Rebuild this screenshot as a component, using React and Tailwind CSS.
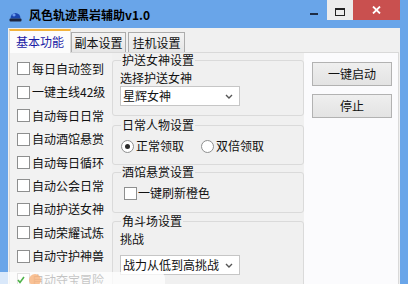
import React from "react";

const font = { fontFamily: '"Noto Sans CJK SC", "Noto Sans", sans-serif' };

const leftItems = [
  "每日自动签到",
  "一键主线42级",
  "自动每日日常",
  "自动酒馆悬赏",
  "自动每日循环",
  "自动公会日常",
  "自动护送女神",
  "自动荣耀试炼",
  "自动守护神兽",
  "自动夺宝冒险",
];

const Box = () => (
  <span className="w-[13px] h-[13px] border border-[#8e8f8f] bg-white shrink-0" />
);

const Radio = ({ checked }) => (
  <span className="w-[13px] h-[13px] rounded-full border border-[#8e8f8f] bg-white shrink-0 flex items-center justify-center">
    {checked && <span className="w-[5px] h-[5px] rounded-full bg-[#2b2b2b]" />}
  </span>
);

const Chevron = () => (
  <svg width="8" height="5" viewBox="0 0 8 5" className="ml-auto mr-[6px]">
    <path d="M1 1 L4 4 L7 1" fill="none" stroke="#555" strokeWidth="1.4" />
  </svg>
);

const Select = ({ value, className }) => (
  <div
    className={`w-[120px] h-[20px] bg-white border border-[#c6c6c6] flex items-center pl-[2px] text-[12px] leading-[14px] ${className}`}
  >
    <span>{value}</span>
    <Chevron />
  </div>
);

const Group = ({ title, className, children }) => (
  <fieldset className={`border border-[#dadada] rounded-[3px] px-[7px] ${className}`}>
    <legend className="ml-[1px] px-[1px] text-[12px] leading-[14px] text-[#111]">{title}</legend>
    {children}
  </fieldset>
);

export default function App() {
  return (
    <div
      className="w-[408px] h-[284px] overflow-hidden bg-[#69a5e9] flex flex-col relative text-[#111]"
      style={font}
    >
      {/* Title Bar */}
      <div className="h-[28px] flex items-start shrink-0">
        <svg width="13" height="12" viewBox="0 0 13 12" className="ml-[9px] mt-[10px]">
          <path d="M1.5 8.5 A5 5.5 0 0 1 11.5 8.5 Z" fill="#1a46b0" />
          <ellipse cx="5" cy="5" rx="1.6" ry="1.4" fill="#6d9cf0" />
          <rect x="0.5" y="8.5" width="12" height="3" rx="1" fill="#1c2540" />
        </svg>
        <span className="ml-[7px] mt-[8px] text-[12px] leading-[14px] font-bold text-black">
          风色轨迹黑岩辅助v1.0
        </span>
        <div className="ml-auto flex items-start mr-[8px]">
          <div className="w-[26px] h-[20px] flex justify-center pt-[13px]">
            <span className="w-[8px] h-[2px] bg-[#1d2c44]" />
          </div>
          <div className="w-[26px] h-[20px] bg-[#ececec] flex justify-center pt-[8px]">
            <span className="w-[10px] h-[8px] border border-t-2 border-[#222]" />
          </div>
          <div className="w-[47px] h-[20px] bg-[#c9504f] flex items-center justify-center">
            <svg width="9" height="8" viewBox="0 0 9 8">
              <path d="M1 0.5 L8 7.5 M8 0.5 L1 7.5" stroke="#fff" strokeWidth="1.8" />
            </svg>
          </div>
        </div>
      </div>

      {/* Client */}
      <div className="h-[280px] shrink-0 mx-[8px] bg-[#f0f0f0] flex flex-col">
        {/* Tabs */}
        <div className="h-[24px] flex items-end pl-[1px] text-[12px] leading-[14px] shrink-0">
          <div className="relative z-10 -mb-[1px] w-[62px] h-[24px] bg-[#fcfcfc] border border-b-0 border-[#d9d9d9] border-t-2 border-t-[#f2b33d] flex items-center justify-center text-[#1b1ba6]">
            基本功能
          </div>
          <div className="w-[55px] h-[20px] bg-gradient-to-b from-[#f3f3f3] to-[#e6e6e6] border border-b-0 border-[#acacac] flex items-center justify-center">
            副本设置
          </div>
          <div className="ml-[2px] w-[57px] h-[20px] bg-gradient-to-b from-[#f3f3f3] to-[#e6e6e6] border border-b-0 border-[#acacac] flex items-center justify-center">
            挂机设置
          </div>
        </div>

        {/* Tab Page */}
        <div className="flex-1 mx-[1px] border border-[#d9d9d9] bg-[#fbfbfd] flex">
          {/* Left checkbox list */}
          <div className="w-[102px] bg-[#f2f2f2] pt-[4.3px] pl-[7px] text-[12px] leading-[14px]">
            {leftItems.map((item) => (
              <div key={item} className="h-[23.4px] flex items-center">
                <Box />
                <span className="ml-[2px] whitespace-nowrap">{item}</span>
              </div>
            ))}
          </div>

          {/* Middle groups */}
          <div className="w-[192px] bg-[#f0f0f0] flex flex-col">
            <Group title="护送女神设置" className="pb-[9px]">
              <div className="mt-[4px] text-[12px] leading-[14px]">选择护送女神</div>
              <Select value="星辉女神" className="mt-[1px]" />
            </Group>

            <Group title="日常人物设置" className="mt-[2px] pb-[11px]">
              <div className="mt-[7px] h-[14px] flex items-center text-[12px] leading-[14px]">
                <span className="ml-[1px]"><Radio checked /></span>
                <span className="ml-[2px]">正常领取</span>
                <span className="ml-[17px]"><Radio /></span>
                <span className="ml-[2px]">双倍领取</span>
              </div>
            </Group>

            <Group title="酒馆悬赏设置" className="pb-[12px]">
              <div className="mt-[7px] h-[14px] flex items-center text-[12px] leading-[14px] pl-[4px]">
                <Box />
                <span className="ml-[1px]">一键刷新橙色</span>
              </div>
            </Group>

            <Group title="角斗场设置" className="mt-[1px] flex-1">
              <div className="mt-[4px] text-[12px] leading-[14px]">挑战</div>
              <Select value="战力从低到高挑战" className="mt-[9px]" />
            </Group>
          </div>

          {/* Right buttons */}
          <div className="flex-1 pl-[8px] pt-[9px] flex flex-col gap-[8px] text-[12px] leading-[14px]">
            <button className="w-[80px] h-[24px] bg-gradient-to-b from-[#efefef] to-[#e3e3e3] border border-[#b2b2b2] flex items-center justify-center">
              一键启动
            </button>
            <button className="w-[80px] h-[24px] bg-gradient-to-b from-[#efefef] to-[#e3e3e3] border border-[#b2b2b2] flex items-center justify-center">
              停止
            </button>
          </div>
        </div>
      </div>

      {/* Faded toast over the bottom-left corner */}
      <div className="absolute left-0 bottom-0 w-[165px] h-[12px] bg-white/75 rounded-tr-[6px]">
        <svg width="8" height="8" viewBox="0 0 8 8" className="absolute left-[17px] top-[4px]">
          <path d="M1 4 L3 6.5 L7 1" fill="none" stroke="#4fb34a" strokeWidth="1.6" />
        </svg>
        <span className="absolute left-[29px] top-[2px] w-[12px] h-[12px] rounded-full bg-[#f7b27a]/80" />
      </div>
    </div>
  );
}
